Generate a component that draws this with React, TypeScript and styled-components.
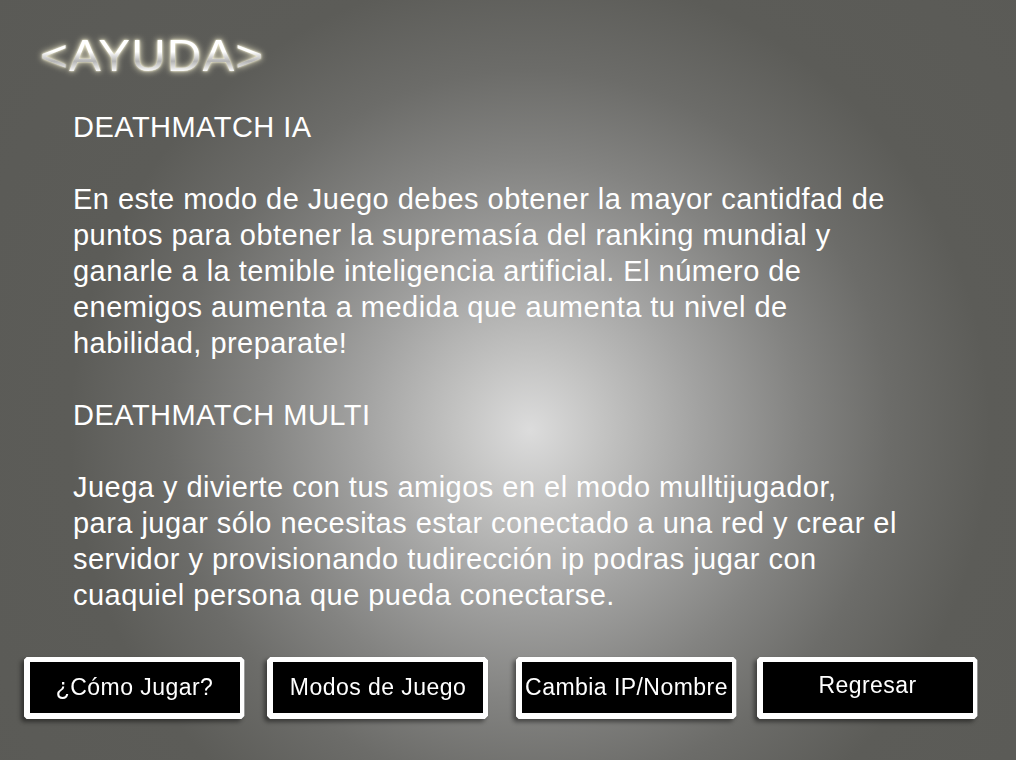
import React from "react";
import styled, { createGlobalStyle } from "styled-components";

const GlobalStyle = createGlobalStyle`
  html, body { margin: 0; padding: 0; }
  body { background: #5b5b57; }
`;

const Screen = styled.div`
  width: 1016px;
  height: 760px;
  overflow: hidden;
  box-sizing: border-box;
  display: flex;
  flex-direction: column;
  font-family: "Liberation Sans", Arial, sans-serif;
  background: radial-gradient(
    circle at 530px 430px,
    #dcdcdc 0px,
    #c4c4c3 70px,
    #a2a2a1 170px,
    #838381 270px,
    #6c6c69 360px,
    #5c5c58 460px,
    #5a5a56 700px
  );
`;

const Title = styled.h1`
  margin: 30px 0 0 40px;
  height: 52px;
  font-family: "Liberation Sans", Arial, sans-serif;
  font-weight: normal;
  font-size: 44px;
  line-height: 52px;
  letter-spacing: 1px;
  transform: scaleX(1.085);
  transform-origin: left center;
  background: linear-gradient(180deg, #ffffff 0%, #ffffff 42%, #b4b4b4 60%, #ffffff 80%);
  -webkit-background-clip: text;
  background-clip: text;
  color: transparent;
  filter: drop-shadow(0 0 1px #fffbe0) drop-shadow(0 0 3px rgba(255, 250, 215, 0.9));
  align-self: flex-start;
`;

const Content = styled.div`
  margin: 27px 0 0 73px;
  color: #ffffff;
  font-size: 29px;
  line-height: 36px;
  letter-spacing: 0.47px;
`;

const Line = styled.div`
  height: 36px;
  white-space: nowrap;
`;

const ButtonRow = styled.div`
  margin-top: auto;
  margin-bottom: 41px;
  padding-left: 12px;
  display: grid;
  grid-template-columns: 244px 243px 254px 228px;
`;

const ButtonShadow = styled.div`
  justify-self: center;
  filter: drop-shadow(-3px 3px 2px rgba(0, 0, 0, 0.45));
`;

const Button = styled.button<{ $offsetY?: number }>`
  width: 221px;
  height: 62px;
  box-sizing: border-box;
  border: 5px solid #ffffff;
  border-bottom-width: 6px;
  border-left-width: 6px;
  background: #000000;
  color: #ffffff;
  font-family: "Liberation Sans", Arial, sans-serif;
  font-size: 23px;
  letter-spacing: 0.45px;
  padding: 0 0 ${(p) => (p.$offsetY ?? 0) * -2}px 0;
  cursor: pointer;
  clip-path: polygon(
    3px 0, calc(100% - 3px) 0, 100% 3px, 100% calc(100% - 3px),
    calc(100% - 3px) 100%, 3px 100%, 0 calc(100% - 3px), 0 3px
  );
  white-space: nowrap;
`;

const lines: string[] = [
  "DEATHMATCH IA",
  "",
  "En este modo de Juego debes obtener la mayor cantidfad de",
  "puntos para obtener la supremasía del ranking mundial y",
  "ganarle a la temible inteligencia artificial. El número de",
  "enemigos aumenta a medida que aumenta tu nivel de",
  "habilidad, preparate!",
  "",
  "DEATHMATCH MULTI",
  "",
  "Juega y divierte con tus amigos en el modo mulltijugador,",
  "para jugar sólo necesitas estar conectado a una red y crear el",
  "servidor y provisionando tudirección ip podras jugar con",
  "cuaquiel persona que pueda conectarse.",
];

const buttons: { label: string; offsetY?: number }[] = [
  { label: "¿Cómo Jugar?" },
  { label: "Modos de Juego" },
  { label: "Cambia IP/Nombre" },
  { label: "Regresar", offsetY: -2 },
];

export default function App() {
  return (
    <>
      <GlobalStyle />
      <Screen>
        <Title>&lt;AYUDA&gt;</Title>
        <Content>
          {lines.map((l, i) => (
            <Line key={i}>{l || "\u00a0"}</Line>
          ))}
        </Content>
        <ButtonRow>
          {buttons.map((b) => (
            <ButtonShadow key={b.label}>
              <Button $offsetY={b.offsetY}>{b.label}</Button>
            </ButtonShadow>
          ))}
        </ButtonRow>
      </Screen>
    </>
  );
}
